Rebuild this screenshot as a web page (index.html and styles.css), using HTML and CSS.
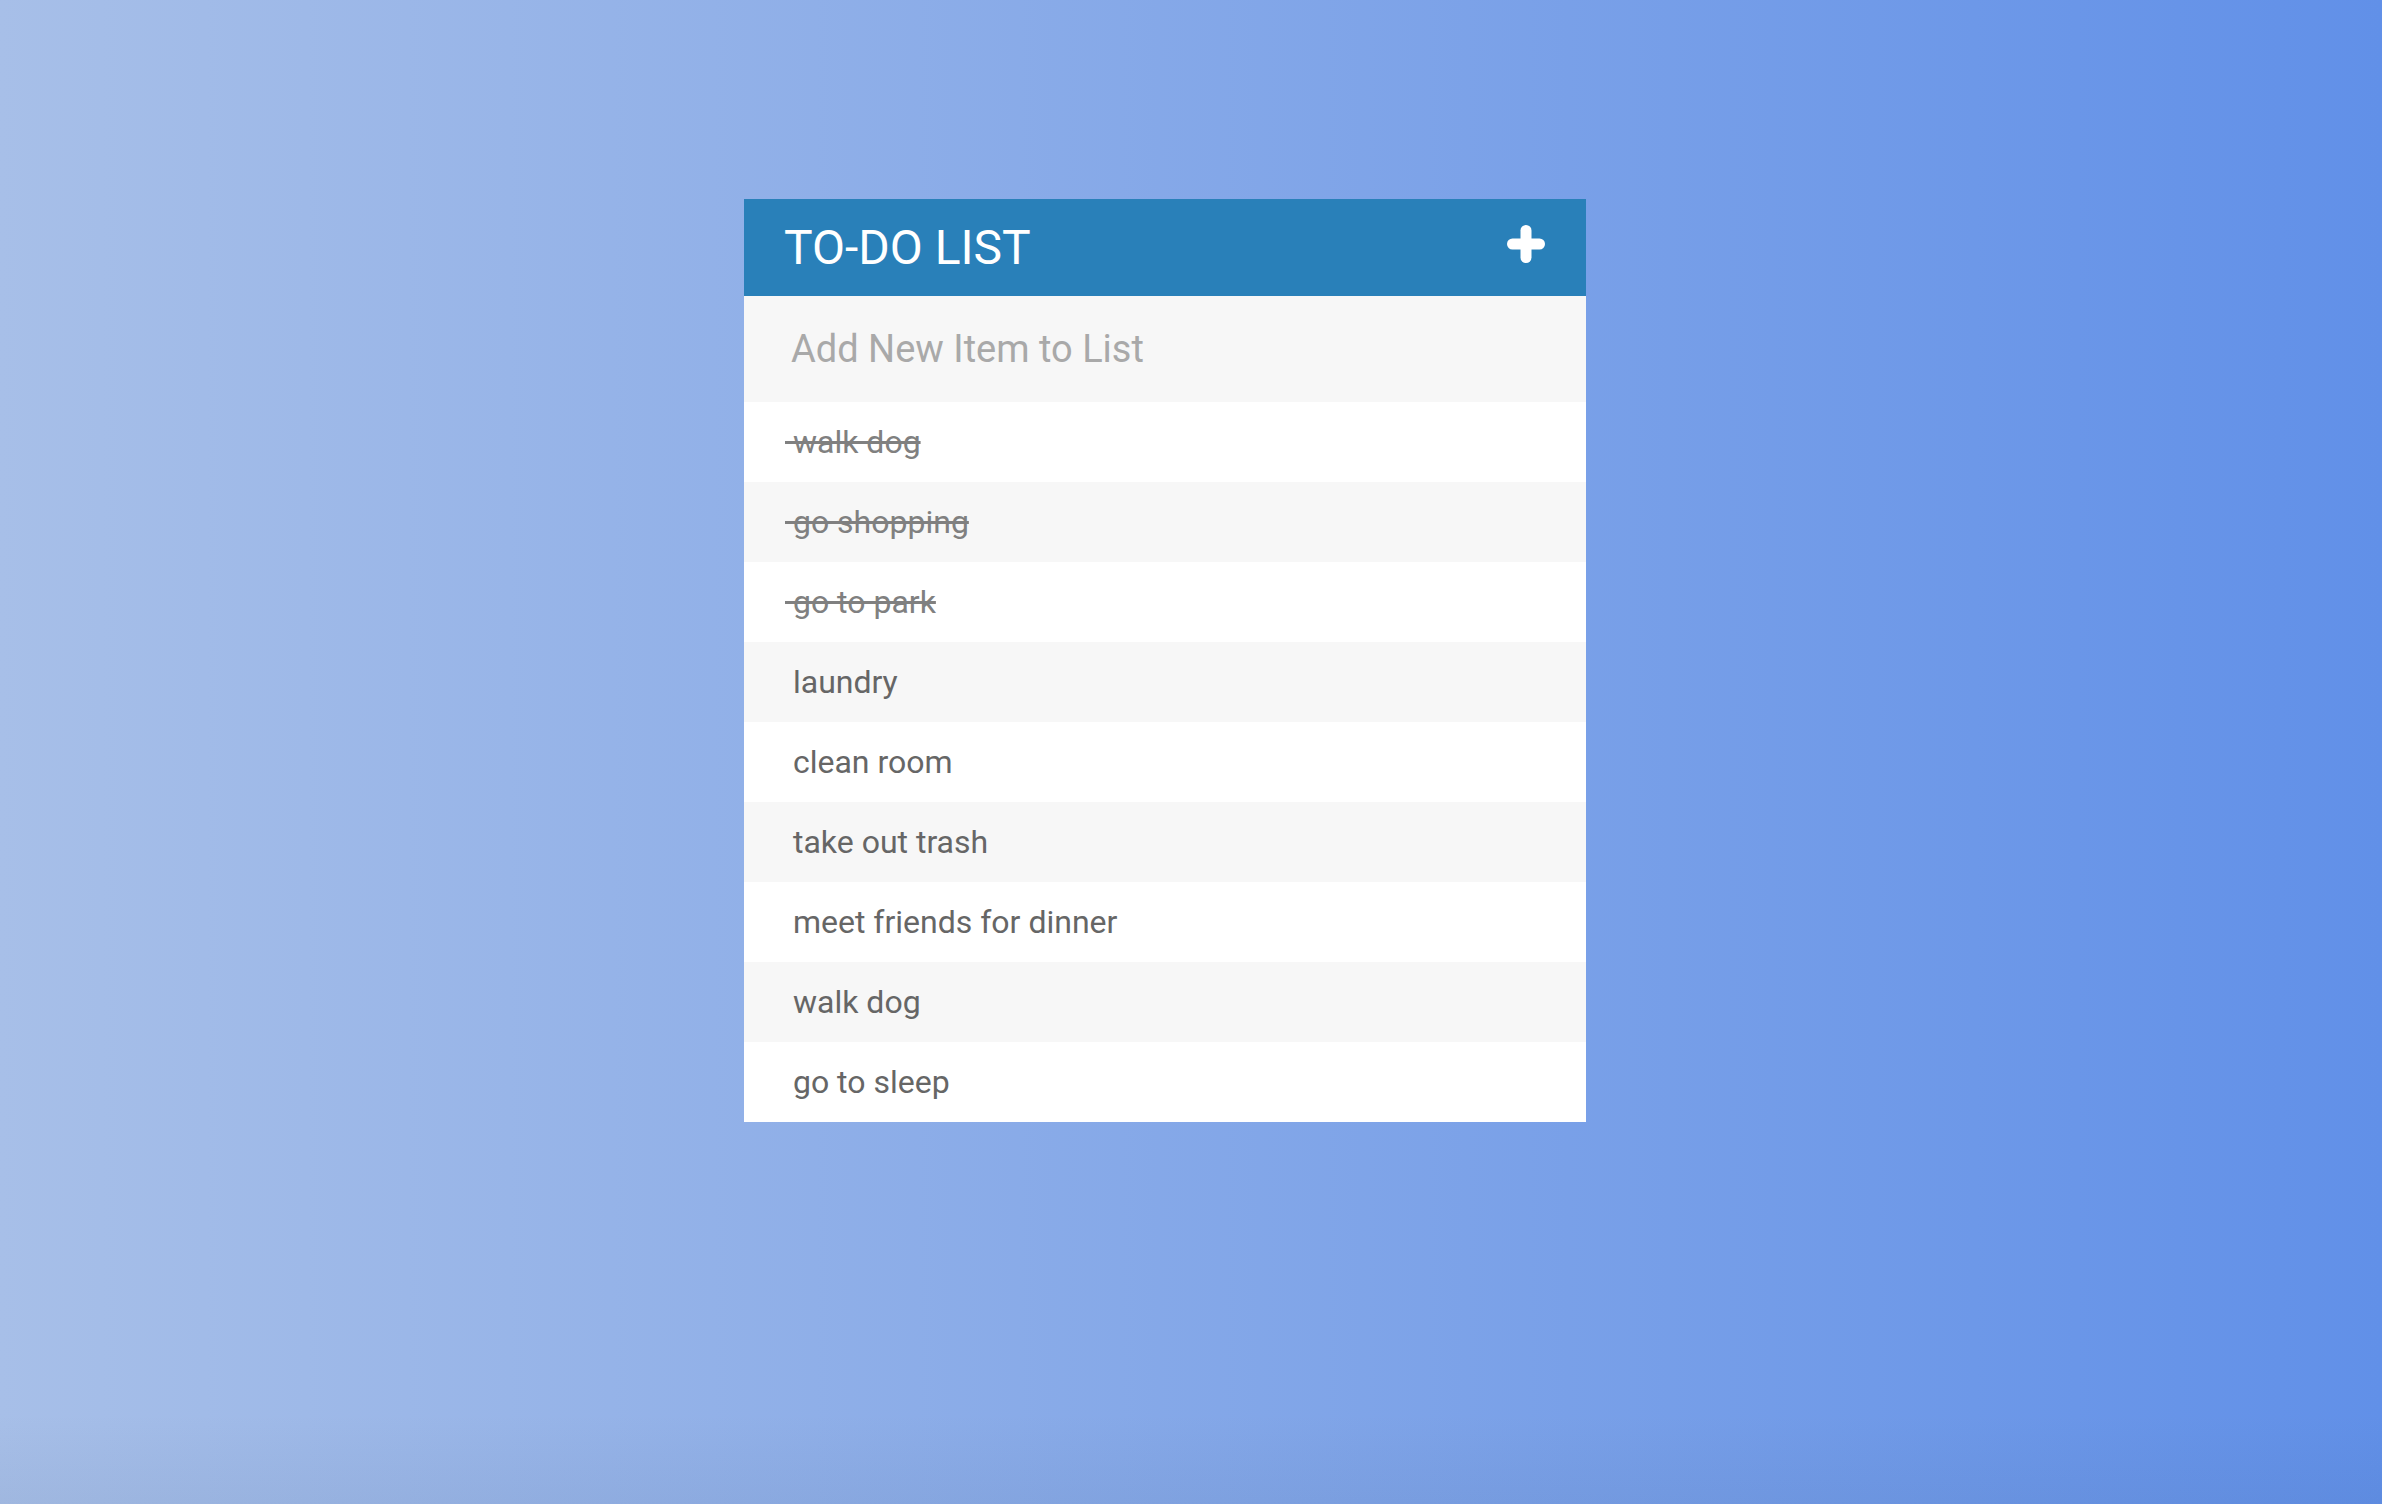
FILE: index.html
```html
<!DOCTYPE html>
<html lang="en">
<head>
<meta charset="utf-8">
<title>To-Do List</title>
<link rel="stylesheet" href="styles.css">
</head>
<body>
<main class="page">
  <section class="todo">
    <header class="todo-head">
      <h1 class="todo-title">TO-DO LIST</h1>
      <svg class="plus" width="38" height="38" viewBox="0 0 38 38" aria-hidden="true">
        <line x1="19" y1="5.5" x2="19" y2="32.5" stroke="#fff" stroke-width="11" stroke-linecap="round"/>
        <line x1="5.5" y1="19" x2="32.5" y2="19" stroke="#fff" stroke-width="11" stroke-linecap="round"/>
      </svg>
    </header>
    <input class="todo-input" type="text" placeholder="Add New Item to List">
    <ul class="todo-list">
      <li class="item done">&nbsp;walk dog</li>
      <li class="item done">&nbsp;go shopping</li>
      <li class="item done">&nbsp;go to park</li>
      <li class="item">&nbsp;laundry</li>
      <li class="item">&nbsp;clean room</li>
      <li class="item">&nbsp;take out trash</li>
      <li class="item">&nbsp;meet friends for dinner</li>
      <li class="item">&nbsp;walk dog</li>
      <li class="item">&nbsp;go to sleep</li>
    </ul>
  </section>
</main>
</body>
</html>
```
FILE: styles.css
```css
html, body {
  margin: 0;
  padding: 0;
}
body {
  min-height: 100vh;
  font-family: Roboto, "Liberation Sans", sans-serif;
  background:
    linear-gradient(to bottom, rgba(0,0,0,0) 94%, rgba(40,60,90,0.06) 100%),
    linear-gradient(to right, #a7bfe8, #6190e8);
}
.page {
  padding: 199px 52px 0 0;
}
.todo {
  width: 842px;
  margin: 0 auto;
  background: #fff;
}
.todo-head {
  height: 97px;
  background: #2980b9;
  display: flex;
  align-items: center;
  justify-content: space-between;
  padding: 0 41px 0 40px;
  box-sizing: border-box;
}
.todo-title {
  margin: 0;
  font-size: 48px;
  font-weight: 400;
  color: #fff;
  line-height: 1;
}
.plus {
  display: block;
  margin-top: -8px;
}
.todo-input {
  display: block;
  width: 100%;
  height: 106px;
  box-sizing: border-box;
  border: none;
  outline: none;
  background: #f7f7f7;
  padding: 0 0 0 47px;
  font-family: Roboto, "Liberation Sans", sans-serif;
  font-size: 38px;
  color: #666;
}
.todo-input::placeholder {
  color: #a9a9a9;
}
.todo-list {
  list-style: none;
  margin: 0;
  padding: 0;
}
.item {
  height: 80px;
  line-height: 80px;
  padding-left: 41px;
  font-size: 32px;
  color: #666;
  background: #fff;
}
.item:nth-child(2n) {
  background: #f7f7f7;
}
.item.done {
  color: #808080;
  text-decoration: line-through;
}
```
